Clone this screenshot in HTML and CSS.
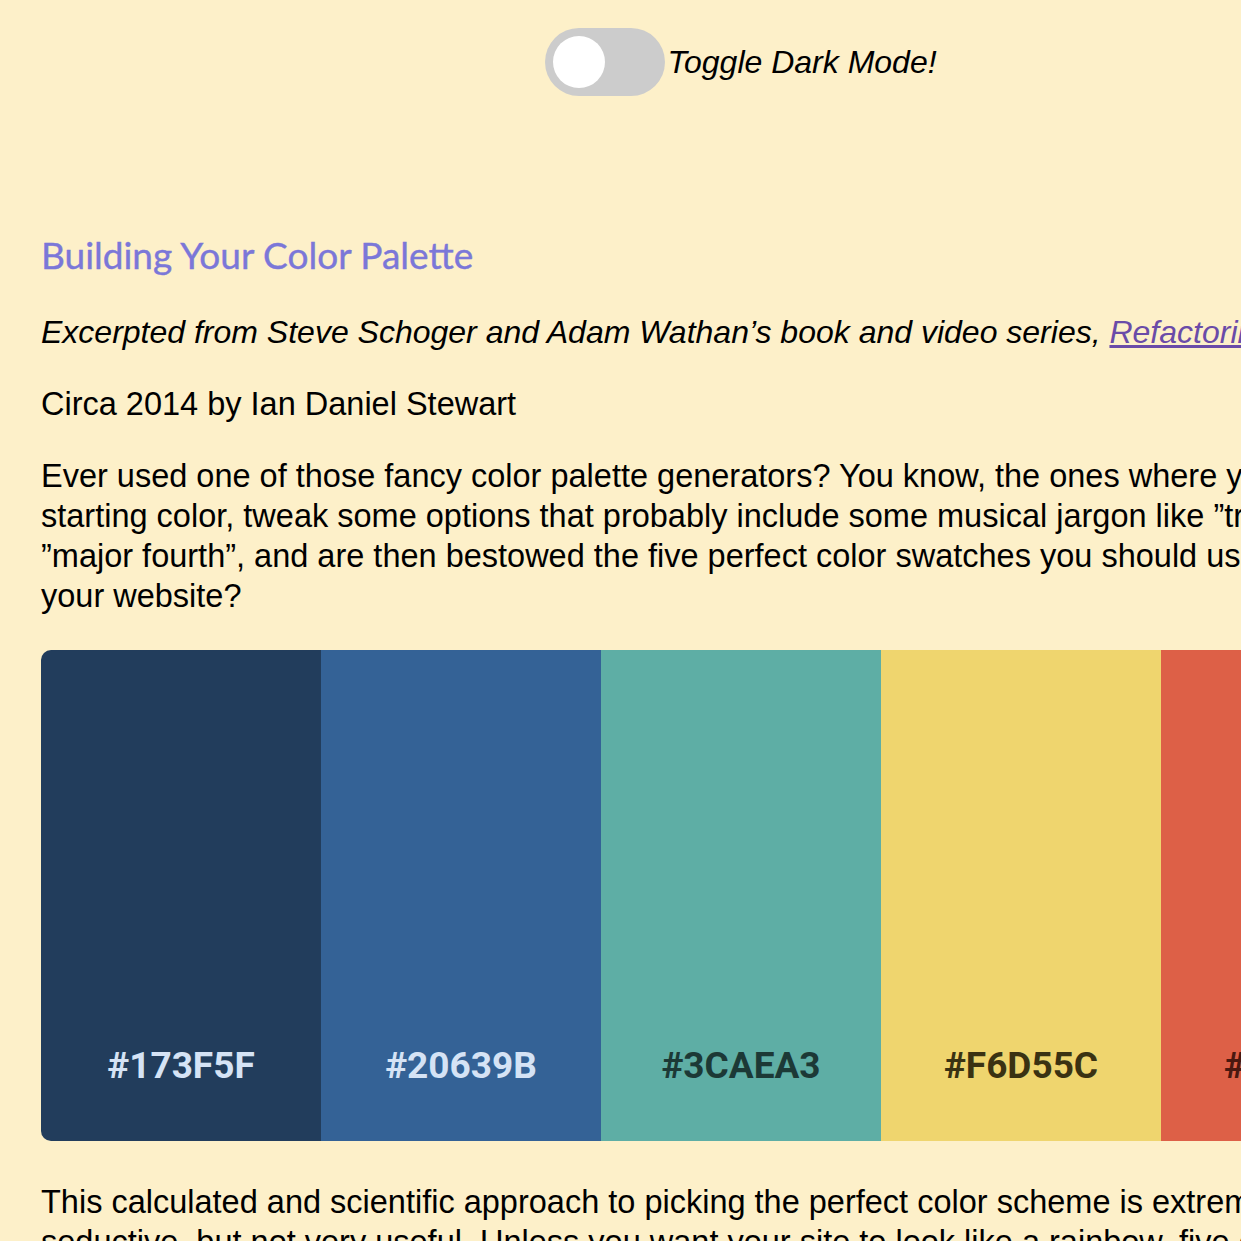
FILE: index.html
```html
<!DOCTYPE html>
<html lang="en">
<head>
<meta charset="utf-8">
<title>Building Your Color Palette</title>
<link rel="stylesheet" href="styles.css">
</head>
<body>
<div class="page">
  <header class="topbar">
    <label class="toggle">
      <span class="track"><span class="knob"></span></span>
      <span class="toggle-label">Toggle Dark Mode!</span>
    </label>
  </header>
  <main class="article">
    <h2 class="title">Building Your Color Palette</h2>
    <p class="excerpt">Excerpted from Steve Schoger and Adam Wathan’s book and video series, <a href="#">Refactoring UI</a>.</p>
    <p class="text">Circa 2014 by Ian Daniel Stewart</p>
    <p class="text">Ever used one of those fancy color palette generators? You know, the ones where you pick a starting color, tweak some options that probably include some musical jargon like ”triad” or ”major fourth”, and are then bestowed the five perfect color swatches you should use on <span class="keep">your website?</span></p>
    <div class="palette">
      <div class="swatch s1"><span>#173F5F</span></div>
      <div class="swatch s2"><span>#20639B</span></div>
      <div class="swatch s3"><span>#3CAEA3</span></div>
      <div class="swatch s4"><span>#F6D55C</span></div>
      <div class="swatch s5"><span>#ED553B</span></div>
    </div>
    <p class="text">This calculated and scientific approach to picking the perfect color scheme is extremely seductive, but not very useful. Unless you want your site to look like a rainbow, five evenly spaced colors are not going to get you very far.</p>
  </main>
</div>
</body>
</html>
```
FILE: styles.css
```css
html, body {
  margin: 0;
  padding: 0;
}
body {
  background: #fdf0c9;
  color: #000;
  font-family: "Liberation Sans", Arial, sans-serif;
}
.page {
  width: 1400px;
  padding: 28px 41px 40px;
}
.topbar {
  display: flex;
  justify-content: center;
}
.toggle {
  display: flex;
  align-items: center;
  gap: 2px;
}
.track {
  display: flex;
  align-items: center;
  width: 120px;
  height: 68px;
  border-radius: 34px;
  background: #cccccc;
  padding: 0 8px;
  box-sizing: border-box;
}
.knob {
  width: 52px;
  height: 52px;
  border-radius: 50%;
  background: #ffffff;
}
.toggle-label {
  font-style: italic;
  font-size: 32px;
  color: #000;
}
.article {
  margin-top: 137px;
}
.title {
  margin: 0;
  font-family: Lato, "Open Sans", sans-serif;
  font-weight: 400;
  font-size: 37px;
  line-height: 44px;
  color: #7b77d8;
  -webkit-text-stroke: 0.4px #7b77d8;
}
.excerpt {
  margin: 35px 0 0;
  font-style: italic;
  font-size: 32px;
  line-height: 40px;
}
.excerpt a {
  color: #6a4ba8;
}
.text {
  margin: 32px 0 0;
  max-width: 1388px;
  font-size: 32.5px;
  line-height: 40px;
}
.keep {
  white-space: nowrap;
}
.palette {
  display: flex;
  margin-top: 34px;
  height: 491px;
  border-radius: 10px;
  overflow: hidden;
}
.swatch {
  flex: 1;
  display: flex;
  align-items: flex-end;
  justify-content: center;
  padding-bottom: 54px;
  box-sizing: border-box;
  font-family: Roboto, sans-serif;
  font-weight: 700;
  font-size: 37px;
}
.s1 { background: #223d5c; color: #d5e3f5; }
.s2 { background: #346296; color: #d5e3f5; }
.s3 { background: #5eaea5; color: #1c3936; }
.s4 { background: #efd56e; color: #3a3212; }
.s5 { background: #dd6047; color: #4a1810; }
.palette + .text {
  margin-top: 41px;
}
```
